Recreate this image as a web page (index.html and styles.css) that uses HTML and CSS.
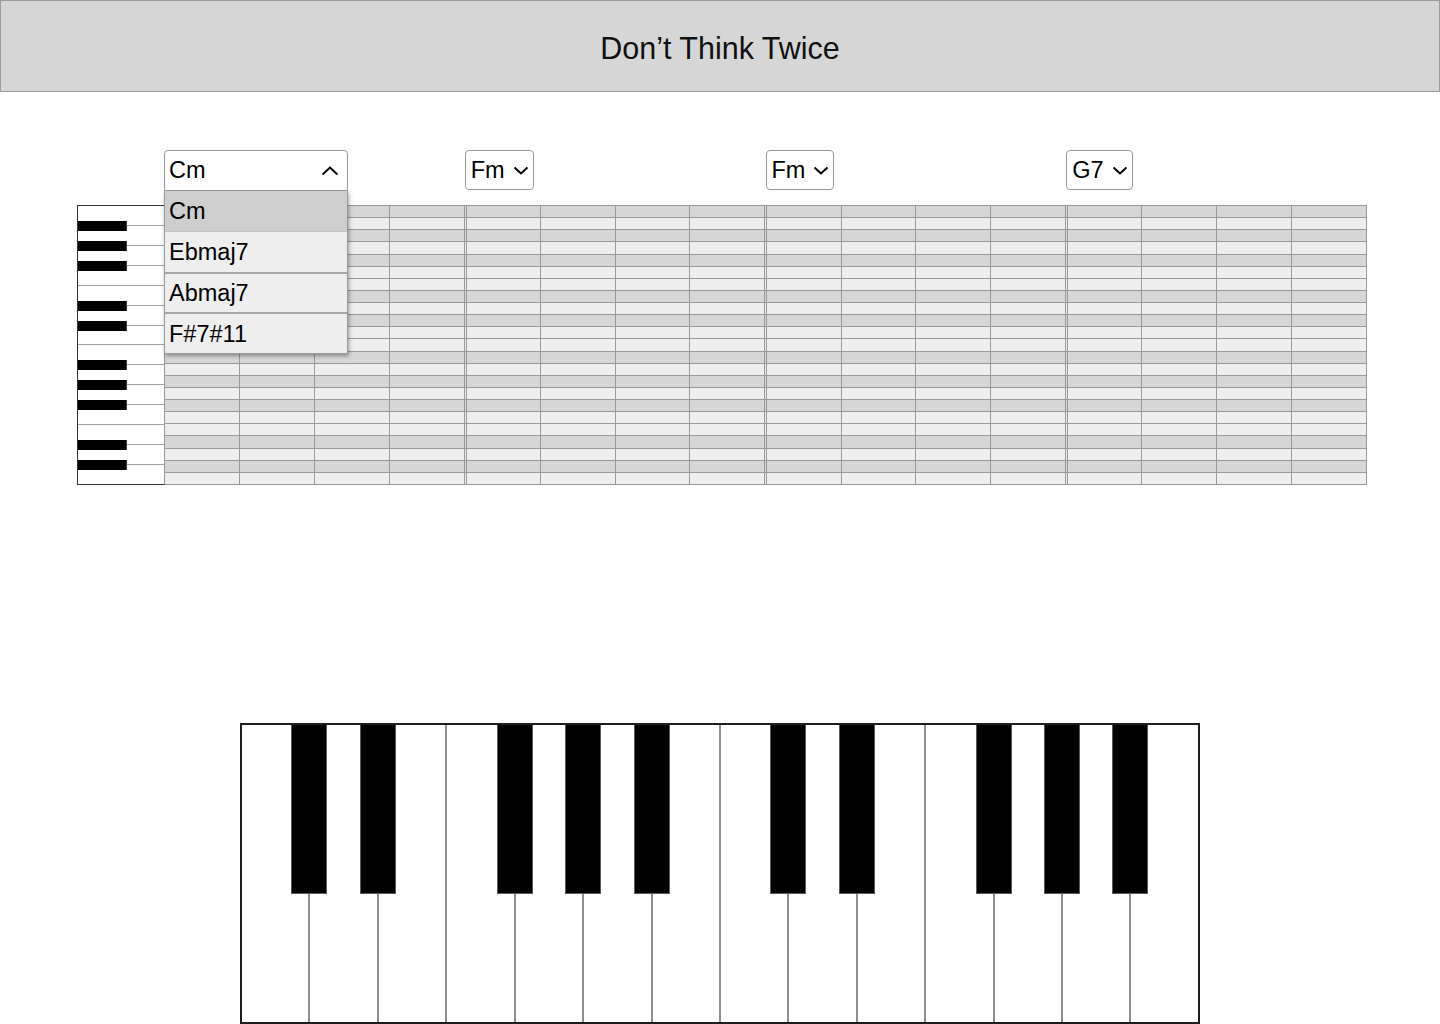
FILE: index.html
```html
<!DOCTYPE html>
<html lang="en">
<head>
<meta charset="utf-8">
<title>Don’t Think Twice</title>
<link rel="stylesheet" href="styles.css">
</head>
<body>
<header class="titlebar"><h1 class="title">Don’t Think Twice</h1></header>

<div class="chords">
  <div class="chords-spacer"></div>
  <div class="slot">
    <div class="select open">
      <span class="select-label">Cm</span>
      <svg class="chev" viewBox="0 0 18 10" width="18" height="10"><polyline points="1.5,8.5 9,1.5 16.5,8.5" fill="none" stroke="#000" stroke-width="2"/></svg>
      <div class="menu">
        <div class="option selected">Cm</div>
        <div class="option">Ebmaj7</div>
        <div class="option">Abmaj7</div>
        <div class="option">F#7#11</div>
      </div>
    </div>
  </div>
  <div class="slot">
    <div class="select">
      <span class="select-label">Fm</span>
      <svg class="chev" viewBox="0 0 16 9" width="16" height="9"><polyline points="1.5,1.5 8,7.5 14.5,1.5" fill="none" stroke="#000" stroke-width="2"/></svg>
    </div>
  </div>
  <div class="slot">
    <div class="select">
      <span class="select-label">Fm</span>
      <svg class="chev" viewBox="0 0 16 9" width="16" height="9"><polyline points="1.5,1.5 8,7.5 14.5,1.5" fill="none" stroke="#000" stroke-width="2"/></svg>
    </div>
  </div>
  <div class="slot">
    <div class="select">
      <span class="select-label">G7</span>
      <svg class="chev" viewBox="0 0 16 9" width="16" height="9"><polyline points="1.5,1.5 8,7.5 14.5,1.5" fill="none" stroke="#000" stroke-width="2"/></svg>
    </div>
  </div>
</div>

<div class="roll">
  <div class="vkeys">
    <div class="vwk"><div class="vbk"></div></div>
    <div class="vwk"><div class="vbk"></div></div>
    <div class="vwk"><div class="vbk"></div></div>
    <div class="vwk"></div>
    <div class="vwk"><div class="vbk"></div></div>
    <div class="vwk"><div class="vbk"></div></div>
    <div class="vwk"></div>
    <div class="vwk"><div class="vbk"></div></div>
    <div class="vwk"><div class="vbk"></div></div>
    <div class="vwk"><div class="vbk"></div></div>
    <div class="vwk"></div>
    <div class="vwk"><div class="vbk"></div></div>
    <div class="vwk"><div class="vbk"></div></div>
    <div class="vwk"></div>
  </div>

  <div class="measure">
    <div class="row d"><span></span><span></span><span></span><span></span></div>
    <div class="row l"><span></span><span></span><span></span><span></span></div>
    <div class="row d"><span></span><span></span><span></span><span></span></div>
    <div class="row l"><span></span><span></span><span></span><span></span></div>
    <div class="row d"><span></span><span></span><span></span><span></span></div>
    <div class="row l"><span></span><span></span><span></span><span></span></div>
    <div class="row l"><span></span><span></span><span></span><span></span></div>
    <div class="row d"><span></span><span></span><span></span><span></span></div>
    <div class="row l"><span></span><span></span><span></span><span></span></div>
    <div class="row d"><span></span><span></span><span></span><span></span></div>
    <div class="row l"><span></span><span></span><span></span><span></span></div>
    <div class="row l"><span></span><span></span><span></span><span></span></div>
    <div class="row d"><span></span><span></span><span></span><span></span></div>
    <div class="row l"><span></span><span></span><span></span><span></span></div>
    <div class="row d"><span></span><span></span><span></span><span></span></div>
    <div class="row l"><span></span><span></span><span></span><span></span></div>
    <div class="row d"><span></span><span></span><span></span><span></span></div>
    <div class="row l"><span></span><span></span><span></span><span></span></div>
    <div class="row l"><span></span><span></span><span></span><span></span></div>
    <div class="row d"><span></span><span></span><span></span><span></span></div>
    <div class="row l"><span></span><span></span><span></span><span></span></div>
    <div class="row d"><span></span><span></span><span></span><span></span></div>
    <div class="row l"><span></span><span></span><span></span><span></span></div>
  </div>

  <div class="measure bar">
    <div class="row d"><span></span><span></span><span></span><span></span></div>
    <div class="row l"><span></span><span></span><span></span><span></span></div>
    <div class="row d"><span></span><span></span><span></span><span></span></div>
    <div class="row l"><span></span><span></span><span></span><span></span></div>
    <div class="row d"><span></span><span></span><span></span><span></span></div>
    <div class="row l"><span></span><span></span><span></span><span></span></div>
    <div class="row l"><span></span><span></span><span></span><span></span></div>
    <div class="row d"><span></span><span></span><span></span><span></span></div>
    <div class="row l"><span></span><span></span><span></span><span></span></div>
    <div class="row d"><span></span><span></span><span></span><span></span></div>
    <div class="row l"><span></span><span></span><span></span><span></span></div>
    <div class="row l"><span></span><span></span><span></span><span></span></div>
    <div class="row d"><span></span><span></span><span></span><span></span></div>
    <div class="row l"><span></span><span></span><span></span><span></span></div>
    <div class="row d"><span></span><span></span><span></span><span></span></div>
    <div class="row l"><span></span><span></span><span></span><span></span></div>
    <div class="row d"><span></span><span></span><span></span><span></span></div>
    <div class="row l"><span></span><span></span><span></span><span></span></div>
    <div class="row l"><span></span><span></span><span></span><span></span></div>
    <div class="row d"><span></span><span></span><span></span><span></span></div>
    <div class="row l"><span></span><span></span><span></span><span></span></div>
    <div class="row d"><span></span><span></span><span></span><span></span></div>
    <div class="row l"><span></span><span></span><span></span><span></span></div>
  </div>

  <div class="measure bar">
    <div class="row d"><span></span><span></span><span></span><span></span></div>
    <div class="row l"><span></span><span></span><span></span><span></span></div>
    <div class="row d"><span></span><span></span><span></span><span></span></div>
    <div class="row l"><span></span><span></span><span></span><span></span></div>
    <div class="row d"><span></span><span></span><span></span><span></span></div>
    <div class="row l"><span></span><span></span><span></span><span></span></div>
    <div class="row l"><span></span><span></span><span></span><span></span></div>
    <div class="row d"><span></span><span></span><span></span><span></span></div>
    <div class="row l"><span></span><span></span><span></span><span></span></div>
    <div class="row d"><span></span><span></span><span></span><span></span></div>
    <div class="row l"><span></span><span></span><span></span><span></span></div>
    <div class="row l"><span></span><span></span><span></span><span></span></div>
    <div class="row d"><span></span><span></span><span></span><span></span></div>
    <div class="row l"><span></span><span></span><span></span><span></span></div>
    <div class="row d"><span></span><span></span><span></span><span></span></div>
    <div class="row l"><span></span><span></span><span></span><span></span></div>
    <div class="row d"><span></span><span></span><span></span><span></span></div>
    <div class="row l"><span></span><span></span><span></span><span></span></div>
    <div class="row l"><span></span><span></span><span></span><span></span></div>
    <div class="row d"><span></span><span></span><span></span><span></span></div>
    <div class="row l"><span></span><span></span><span></span><span></span></div>
    <div class="row d"><span></span><span></span><span></span><span></span></div>
    <div class="row l"><span></span><span></span><span></span><span></span></div>
  </div>

  <div class="measure bar">
    <div class="row d"><span></span><span></span><span></span><span></span></div>
    <div class="row l"><span></span><span></span><span></span><span></span></div>
    <div class="row d"><span></span><span></span><span></span><span></span></div>
    <div class="row l"><span></span><span></span><span></span><span></span></div>
    <div class="row d"><span></span><span></span><span></span><span></span></div>
    <div class="row l"><span></span><span></span><span></span><span></span></div>
    <div class="row l"><span></span><span></span><span></span><span></span></div>
    <div class="row d"><span></span><span></span><span></span><span></span></div>
    <div class="row l"><span></span><span></span><span></span><span></span></div>
    <div class="row d"><span></span><span></span><span></span><span></span></div>
    <div class="row l"><span></span><span></span><span></span><span></span></div>
    <div class="row l"><span></span><span></span><span></span><span></span></div>
    <div class="row d"><span></span><span></span><span></span><span></span></div>
    <div class="row l"><span></span><span></span><span></span><span></span></div>
    <div class="row d"><span></span><span></span><span></span><span></span></div>
    <div class="row l"><span></span><span></span><span></span><span></span></div>
    <div class="row d"><span></span><span></span><span></span><span></span></div>
    <div class="row l"><span></span><span></span><span></span><span></span></div>
    <div class="row l"><span></span><span></span><span></span><span></span></div>
    <div class="row d"><span></span><span></span><span></span><span></span></div>
    <div class="row l"><span></span><span></span><span></span><span></span></div>
    <div class="row d"><span></span><span></span><span></span><span></span></div>
    <div class="row l"><span></span><span></span><span></span><span></span></div>
  </div>
</div>

<div class="piano">
  <div class="wk"><div class="bk"></div></div>
  <div class="wk"><div class="bk"></div></div>
  <div class="wk"></div>
  <div class="wk"><div class="bk"></div></div>
  <div class="wk"><div class="bk"></div></div>
  <div class="wk"><div class="bk"></div></div>
  <div class="wk"></div>
  <div class="wk"><div class="bk"></div></div>
  <div class="wk"><div class="bk"></div></div>
  <div class="wk"></div>
  <div class="wk"><div class="bk"></div></div>
  <div class="wk"><div class="bk"></div></div>
  <div class="wk"><div class="bk"></div></div>
  <div class="wk"></div>
</div>
</body>
</html>
```

FILE: styles.css
```css
* { box-sizing: border-box; }

html, body {
  margin: 0;
  padding: 0;
  background: #fff;
  overflow: hidden;
}

body {
  font-family: "Liberation Sans", Arial, Helvetica, sans-serif;
  color: #000;
}

/* Title bar */
.titlebar {
  height: 92px;
  background: #d6d6d6;
  border: 1px solid #9c9c9c;
  display: flex;
  align-items: center;
  justify-content: center;
  padding-top: 4px;
}

.title {
  margin: 0;
  font-size: 30.5px;
  font-weight: 400;
  line-height: 1;
  color: #111;
}

/* Chord selects */
.chords {
  display: flex;
  align-items: flex-start;
  width: 1290px;
  margin: 58px 0 0 77px;
  height: 41px;
}

.chords-spacer {
  flex: none;
  width: 87px;
}

.slot {
  flex: 1;
  min-width: 0;
}

.select {
  position: relative;
  display: inline-flex;
  align-items: center;
  height: 40px;
  padding: 0 4px 0 5px;
  gap: 8px;
  background: #fff;
  border: 1px solid #9a9a9a;
  border-radius: 4px;
  font-size: 23.5px;
  line-height: 1;
}

.select-label {
  padding-top: 1px;
}

.chev {
  display: block;
  flex: none;
}

.select.open {
  width: 184px;
  height: 41px;
  justify-content: space-between;
  padding: 0 8px 0 4px;
  border-radius: 4px 4px 0 0;
}

.menu {
  position: absolute;
  top: calc(100% + 1px);
  left: -1px;
  width: 184px;
  z-index: 10;
  background: #eeeeee;
  border: 1px solid #9a9a9a;
  border-top: none;
  box-shadow: 1px 2px 4px rgba(0, 0, 0, 0.35);
}

.option {
  height: 40.5px;
  display: flex;
  align-items: center;
  padding: 2px 0 0 4px;
  font-size: 23.5px;
  line-height: 1;
  background: #eeeeee;
  border-top: 2px solid #a6a6a6;
}

.option:first-child {
  border-top: none;
  height: 40px;
}

.option + .option:nth-child(2) {
  border-top: 1px solid #c2c2c2;
}

.option.selected {
  background: #cecece;
}

/* Piano roll */
.roll {
  display: flex;
  width: 1290px;
  height: 280px;
  margin: 14px 0 0 77px;
}

.vkeys {
  flex: none;
  width: 88px;
  display: flex;
  flex-direction: column;
  border: 1px solid #333;
  border-right-color: #999;
  background: #fff;
}

.vwk {
  position: relative;
  flex: 1;
  min-height: 0;
  border-bottom: 1px solid #a4a4a4;
}

.vwk:last-child {
  border-bottom: none;
}

.vbk {
  position: absolute;
  left: 0;
  bottom: -6px;
  width: 49px;
  height: 10px;
  background: #000;
  border-right: 1px solid #3a3a3a;
  z-index: 1;
}

.measure {
  flex: 1;
  min-width: 0;
  display: flex;
  flex-direction: column;
  border-top: 1px solid #999;
}

.row {
  flex: 1;
  min-height: 0;
  display: flex;
  border-bottom: 1px solid #999;
}

.row.d { background: #d6d6d6; }
.row.l { background: #eeeeee; }

.row span {
  flex: 1;
  min-width: 0;
  border-right: 1px solid #999;
}

.measure:not(:last-child) .row span:last-child {
  margin-right: 1px;
}

.bar .row span:first-child {
  border-left: 1px solid #999;
}

/* Bottom piano */
.piano {
  display: flex;
  width: 960px;
  height: 301px;
  margin: 238px auto 0;
  border: 2px solid #1e1e1e;
  background: #fff;
}

.wk {
  position: relative;
  flex: 1;
  min-width: 0;
  border-right: 2px solid #8f8f8f;
}

.wk:last-child {
  border-right: none;
}

.bk {
  position: absolute;
  top: 0;
  right: -19px;
  width: 36px;
  height: 169px;
  background: #000;
  border: 1px solid #5a5a5a;
  border-top: none;
  z-index: 1;
}
```
